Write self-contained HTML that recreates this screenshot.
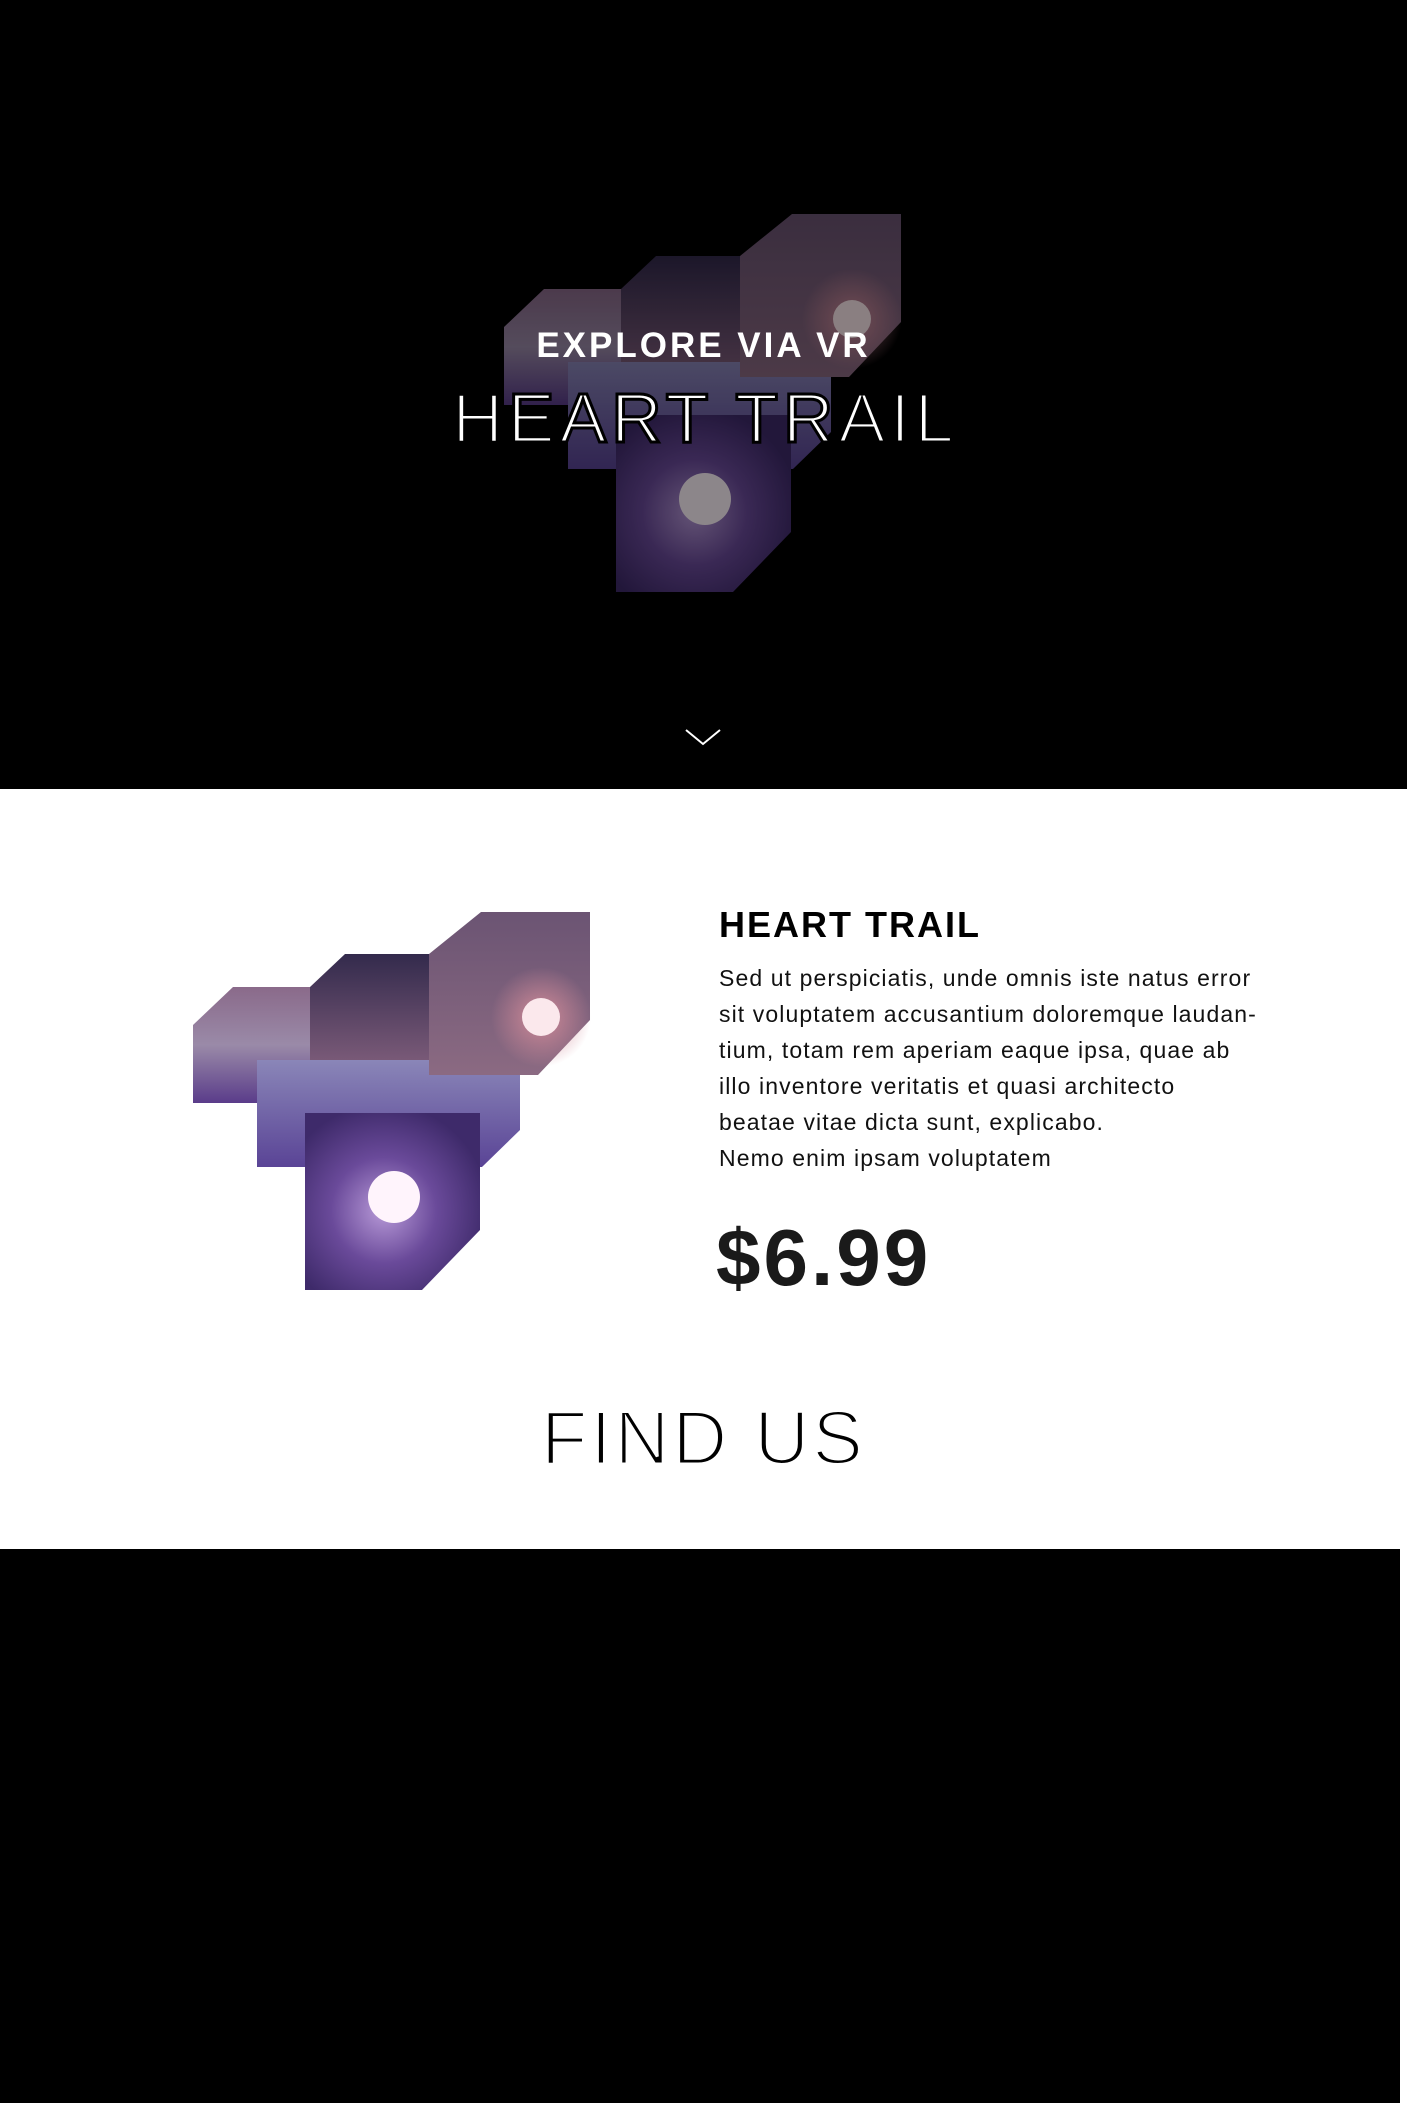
<!DOCTYPE html>
<html><head><meta charset="utf-8"><style>
*{margin:0;padding:0;box-sizing:border-box}
html,body{width:1407px;height:2103px;background:#fff;overflow:hidden;font-family:"Liberation Sans",sans-serif}
.hero{position:absolute;left:0;top:0;width:1407px;height:789px;background:#000}
.abs{position:absolute}
.t1{position:absolute;left:0;width:1407px;text-align:center;top:326px;color:#fff;font-weight:bold;font-size:35px;letter-spacing:3px;line-height:40px}
.t2{position:absolute;left:0;width:1407px;text-align:center;top:378px;color:#fff;font-size:70px;letter-spacing:5px;line-height:80px;-webkit-text-stroke:3px #000;padding-left:4px}
.h2{position:absolute;left:719px;top:904px;font-size:36px;font-weight:bold;letter-spacing:2px;color:#000}
.p{position:absolute;left:719px;top:960px;font-size:23px;line-height:36px;color:#111;letter-spacing:1.1px}
.price{position:absolute;left:716px;top:1212px;font-size:80px;font-weight:bold;color:#1a1a1a;letter-spacing:3px}
.find{position:absolute;left:0;width:1407px;text-align:center;top:1395px;font-size:76px;letter-spacing:3px;-webkit-text-stroke:3px #fff;color:#000}
.foot{position:absolute;left:0;top:1549px;width:1400px;height:554px;background:#000}
</style></head><body>
<svg width="0" height="0" style="position:absolute"><defs>
<linearGradient id="gR" x1="0" y1="0" x2="0" y2="1"><stop offset="0" stop-color="#6b5473"/><stop offset="1" stop-color="#8b6a82"/></linearGradient>
<linearGradient id="gM" x1="0" y1="0" x2="0" y2="1"><stop offset="0" stop-color="#332a4c"/><stop offset="1" stop-color="#7a5a78"/></linearGradient>
<linearGradient id="gL" x1="0" y1="0" x2="0" y2="1"><stop offset="0" stop-color="#8a6a8a"/><stop offset=".5" stop-color="#9a8aa8"/><stop offset="1" stop-color="#5a3c8a"/></linearGradient>
<linearGradient id="gB" x1="0" y1="0" x2="0" y2="1"><stop offset="0" stop-color="#8a86b8"/><stop offset="1" stop-color="#5a4496"/></linearGradient>
<radialGradient id="gG" cx=".45" cy=".55" r=".6"><stop offset="0" stop-color="#b89ad8"/><stop offset=".5" stop-color="#6a4a9a"/><stop offset="1" stop-color="#3e2a6a"/></radialGradient>
<radialGradient id="gS" cx=".5" cy=".5" r=".5"><stop offset="0" stop-color="#d08a98"/><stop offset="1" stop-color="#d08a98" stop-opacity="0"/></radialGradient>
<g id="art">
<polygon points="153,42 248,42 248,150 118,150 118,75" fill="url(#gM)"/>
<polygon points="41,75 118,75 118,191 1,191 1,113" fill="url(#gL)"/>
<polygon points="65,148 328,148 328,218 290,255 65,255" fill="url(#gB)"/>
<polygon points="289,0 398,0 398,108 346,163 237,163 237,42" fill="url(#gR)"/>
<circle cx="349" cy="105" r="50" fill="url(#gS)"/>
<circle cx="349" cy="105" r="19" fill="#fbe8ec"/>
<polygon points="113,201 288,201 288,318 230,378 113,378" fill="url(#gG)"/>
<circle cx="202" cy="285" r="26" fill="#fff4fc"/>
</g></defs></svg>
<div class="hero">
<svg class="abs" style="left:503px;top:214px" width="400" height="380"><use href="#art"/><rect width="400" height="380" fill="#000" opacity=".45"/></svg>
<div class="t1">EXPLORE VIA VR</div>
<div class="t2">HEART TRAIL</div>
<svg class="abs" style="left:685px;top:728px" width="36" height="20"><polyline points="1,2 18,16 35,2" fill="none" stroke="#fff" stroke-width="2"/></svg>
</div>
<svg class="abs" style="left:192px;top:912px" width="400" height="380"><use href="#art"/></svg>
<div class="h2">HEART TRAIL</div>
<div class="p">Sed ut perspiciatis, unde omnis iste natus error<br>sit voluptatem accusantium doloremque laudan-<br>tium, totam rem aperiam eaque ipsa, quae ab<br>illo inventore veritatis et quasi architecto<br>beatae vitae dicta sunt, explicabo.<br>Nemo enim ipsam voluptatem</div>
<div class="price">$6.99</div>
<div class="find">FIND US</div>
<div class="foot"></div>
</body></html>
